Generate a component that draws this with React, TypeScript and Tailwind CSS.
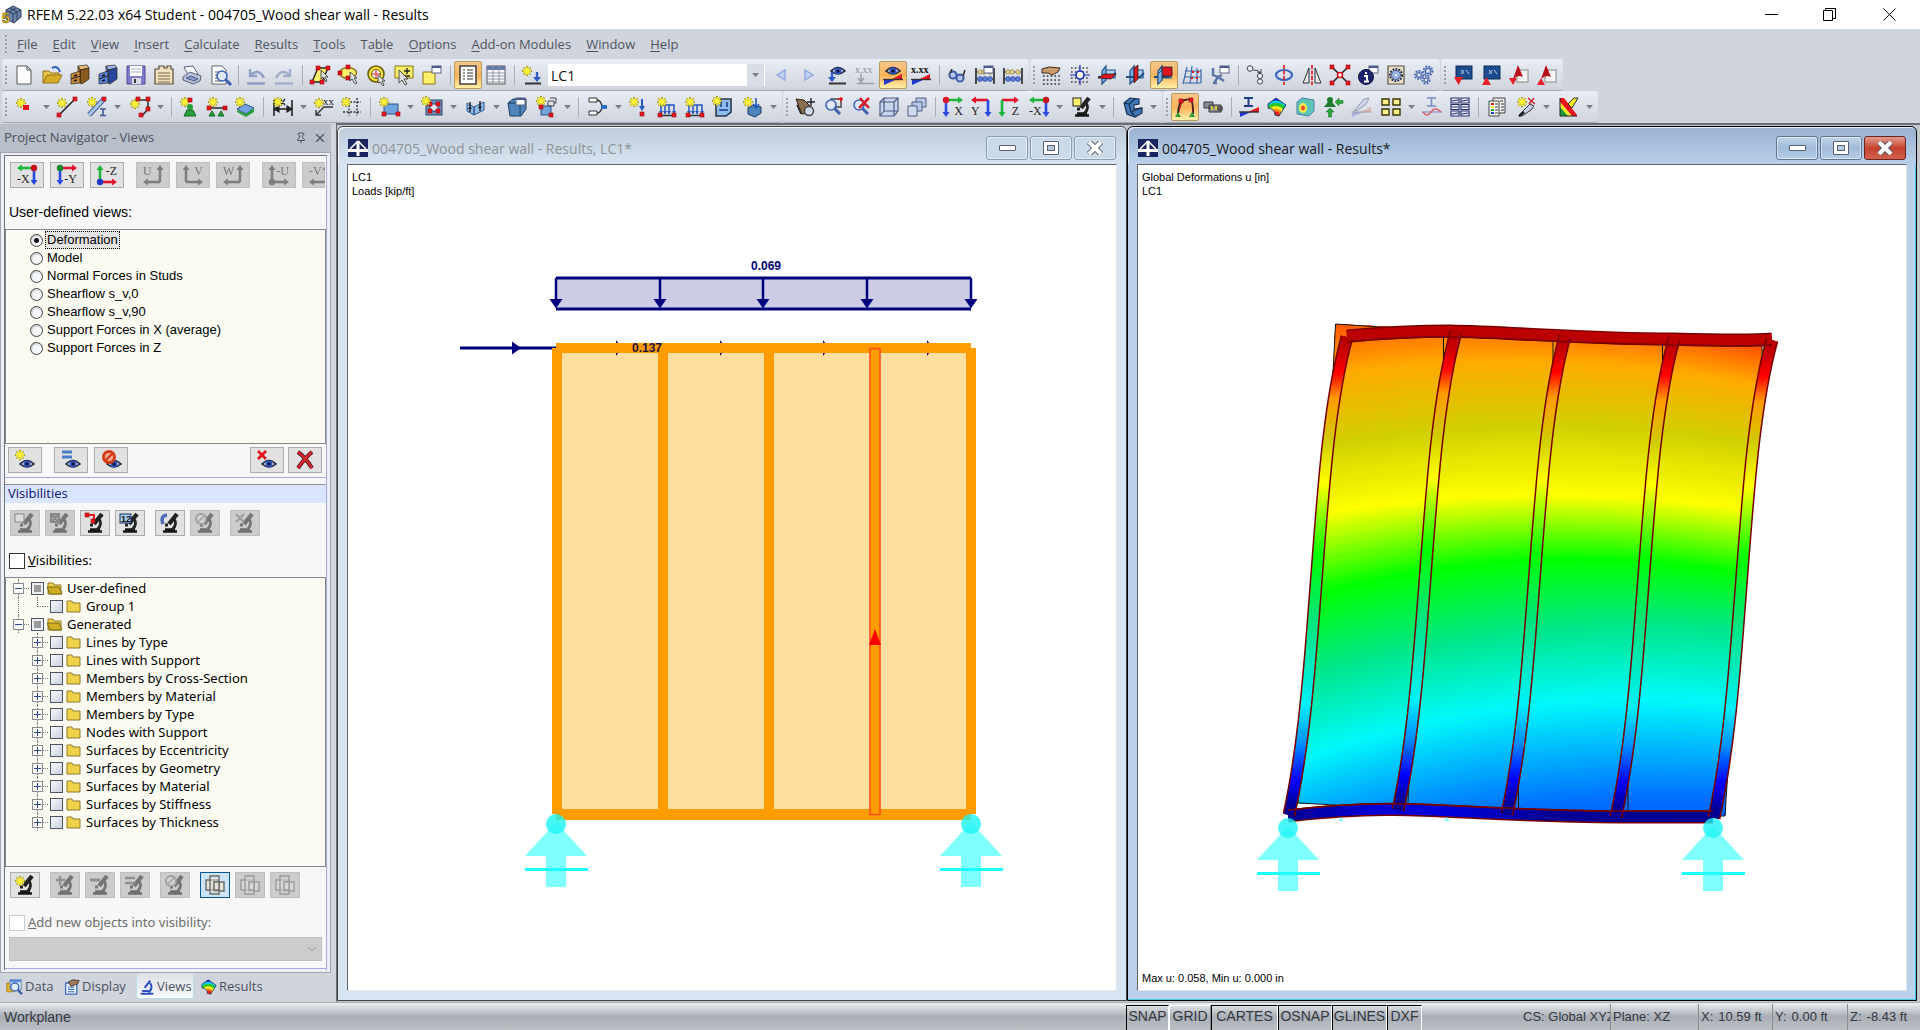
import type { ReactNode } from 'react';
import { Pin, X } from 'lucide-react';

const menus = [
  ['', 'F', 'ile'],
  ['', 'E', 'dit'],
  ['', 'V', 'iew'],
  ['', 'I', 'nsert'],
  ['', 'C', 'alculate'],
  ['', 'R', 'esults'],
  ['', 'T', 'ools'],
  ['Ta', 'b', 'le'],
  ['', 'O', 'ptions'],
  ['', 'A', 'dd-on Modules'],
  ['', 'W', 'indow'],
  ['', 'H', 'elp'],
];

/* ---------- icon building blocks, all on a 20x20 grid ---------- */

const star = (x: number, y: number) => (
  <g transform={`translate(${x} ${y})`}>
    <path d="M0-5V5M-5 0H5M-3.5-3.5l7 7M3.5-3.5l-7 7" stroke="#a39c1c" strokeWidth="2" />
    <path d="M0-4V4M-4 0H4M-3-3l6 6M3-3l-6 6" stroke="#fff23a" strokeWidth="1.4" />
  </g>
);

const node = (x: number, y: number) => <rect x={x - 2} y={y - 2} width="4" height="4" fill="#e8131c" stroke="#9c0a10" strokeWidth=".6" />;

const eye = (x: number, y: number) => (
  <g transform={`translate(${x} ${y})`}>
    <path d="M-7 0Q0-7 7 0Q0 6-7 0Z" fill="#b9c4e4" stroke="#1d2440" strokeWidth="1.6" />
    <circle r="3.4" fill="#2f55b8" />
    <circle r="1.5" fill="#0a0f28" />
  </g>
);

const lens = (x: number, y: number) => (
  <g transform={`translate(${x} ${y})`}>
    <path d="M3 3l6 6" stroke="#3d5fae" strokeWidth="3" />
    <circle r="5" fill="#dfe9fa" stroke="#3c64b4" strokeWidth="1.6" />
  </g>
);

const scope = (
  <g>
    <path d="M3 18.500h14M5 16.500h10" stroke="#161616" strokeWidth="2.400" />
    <path d="M17 1l-8 10" stroke="#222" strokeWidth="4.400" />
    <path d="M8 12l-3 0M14 6q4 5-2 11" stroke="#222" strokeWidth="2.800" fill="none" />
  </g>
);

// fan of rainbow bands, blue at the rim and red at the tip
const palette = (
  <g>
    <clipPath id="fan">
      <path d="M1 7L9 1l10 7-7 11-4-1q0-6-7-7z" />
    </clipPath>
    <g clipPath="url(#fan)">
      <path d="M0 0h20v20H0z" fill="#1424d8" />
      <circle cx="9" cy="19" r="15.500" fill="#12c8e8" />
      <circle cx="9" cy="19" r="13" fill="#27c72a" />
      <circle cx="9" cy="19" r="10" fill="#f4e81c" />
      <circle cx="9" cy="19" r="7" fill="#f48a1c" />
      <circle cx="9" cy="19" r="4.500" fill="#e8201a" />
    </g>
    <path d="M1 7L9 1l10 7-7 11-4-1q0-6-7-7z" stroke="#1c2c5c" strokeWidth=".8" />
  </g>
);

const win = (x: number, y: number) => (
  <g>
    <rect x={x} y={y} width="9" height="7" fill="#fff" stroke="#5c6484" />
    <rect x={x} y={y} width="9" height="2" fill="#4a5890" />
  </g>
);

const planeCross = (
  <g strokeWidth="1.200">
    <path d="M6 5h11v8H6z" fill="#b4d0ee" stroke="#1d4f86" />
    <path d="M8 1v14l-4 4V6z" fill="#7fb0e0" stroke="#1d4f86" />
    <path d="M0 12h14l4-4" fill="none" stroke="#1d4f86" strokeWidth="2" />
  </g>
);

const abacus = (
  <g>
    <path d="M1 3v16M19 3v16" stroke="#222" strokeWidth="1.600" />
    <path d="M1 7h18M1 14h18" stroke="#444" />
    {[5, 9, 15].map((x) => <circle key={x} cx={x} cy="7" r="2.200" fill="#e6d68c" stroke="#7c6f35" strokeWidth=".6" />)}
    {[5, 10, 15].map((x) => <circle key={x} cx={x} cy="14" r="2.500" fill="#5a7fd8" stroke="#233c86" strokeWidth=".6" />)}
  </g>
);

const dots = (
  <path d="M1 11h18M1 15h18M1 19h18" stroke="#333" strokeWidth="1.600" strokeDasharray="1.6 2.200" />
);

const gear = (x: number, y: number, r: number, fill = '#4a6cb8') => (
  <g transform={`translate(${x} ${y})`}>
    <circle r={r} fill="none" stroke={fill} strokeWidth="2" strokeDasharray="1.800 1.200" />
    <circle r={r - 1.5} fill="#9db4e4" stroke="#2c4684" strokeWidth=".8" />
    <circle r="1" fill="#fff" />
  </g>
);

const loads = (
  <g>
    <path d="M4 8h13v9M4 8v9M8 8v9M12 8v9" stroke="#2558c0" strokeWidth="1.500" fill="none" />
    <path d="M2 14l2 3 2-3zM6 14l2 3 2-3zM10 14l2 3 2-3zM15 14l2 3 2-3z" fill="#2558c0" />
    <path d="M2 18.500h16" stroke="#333" strokeWidth="1.500" />
    {node(3, 18)}
    {node(17, 18)}
  </g>
);

// small filing cabinet: lit top, two drawers in front
const cabinet = (light: string, front: string, side: string) => (
  <g stroke="#2a2418" strokeWidth=".7">
    <path d="M8 1l9-1 2 3-9 2z" fill={light} />
    <path d="M10 5l9-2v11l-7 5-2-1z" fill={side} />
    <path d="M8 1l2 4v6H8z" fill={front} />
    <path d="M1 9l9-3v5l-9 3zM1 14l9-3v7l-9 1z" fill={front} />
    <path d="M4 11l3-1M4 16l3-1" stroke="#111" strokeWidth="1.600" />
  </g>
);

type AxesProps = { label: string; corner: 'tl' | 'tr' | 'bl' | 'br'; h: string; v: string; dot?: string };

const Axes = ({ label, corner, h, v, dot }: AxesProps) => {
  const top = corner[0] === 't';
  const left = corner[1] === 'l';
  const cx = left ? 3 : 17;
  const cy = top ? 3 : 17;
  const ex = left ? 20 : 0;
  const ey = top ? 20 : 0;
  const sx = left ? -5 : 5;
  const sy = top ? -5 : 5;
  return (
    <g>
      <path d={`M${cx} ${cy}H${ex + sx / 2}`} stroke={h} strokeWidth="2.600" />
      <path d={`M${ex} ${cy}l${sx}-3.500v7z`} fill={h} />
      <path d={`M${cx} ${cy}V${ey + sy / 2}`} stroke={v} strokeWidth="2.600" />
      <path d={`M${cx} ${ey}l-3.500 ${sy}h7z`} fill={v} />
      {dot && <circle cx={cx} cy={cy} r="3.200" fill={dot} />}
      <text
        x={left ? 20 : 0}
        y={top ? 18 : 10}
        textAnchor={left ? 'end' : 'start'}
        fontSize="12"
        fontFamily="Liberation Serif, serif"
        fill="#222"
      >
        {label}
      </text>
    </g>
  );
};

const R = '#e0142c';
const G = '#1fb43c';
const B = '#2848e0';

const icons: Record<string, ReactNode> = {
  new: <path d="M3 1h10l4 4v14H3zM13 1v4h4" fill="#fff" stroke="#555" />,
  open: (
    <g stroke="#8a6b12" strokeWidth=".9">
      <path d="M1 18V6h6l2 2h8v3" fill="#e8c64a" />
      <path d="M1 18l4-8h15l-4 8z" fill="#d9ac28" />
      <path d="M10 3q6-3 8 4" stroke="#2e60b8" strokeWidth="2" fill="none" />
    </g>
  ),
  cabinet: cabinet('#e8bc78', '#c8893c', '#8a5a1c'),
  cabinetBlue: cabinet('#9cb8f0', '#5a84dc', '#28479c'),
  save: (
    <g>
      <path d="M1 1h18v18H1z" fill="#7d7cc8" stroke="#4c4a94" />
      <path d="M4 1h12v10H4z" fill="#fff" />
      <path d="M5 4h10M5 7h10" stroke="#a7a7cc" />
      <path d="M6 13h9v6H6z" fill="#d9dbe6" />
      <path d="M8 14h2v4H8z" fill="#333" />
    </g>
  ),
  protocol: (
    <g>
      <path d="M1 4h4V1h5v2h3V1h4v3h2v15H1z" fill="#f0dfc0" stroke="#5c4c34" strokeWidth="1.200" />
      <path d="M4 8h12M4 11h12M4 14h12M4 17h12" stroke="#7c6a4a" />
    </g>
  ),
  print: (
    <g stroke="#4a4f6c" strokeWidth=".9">
      <path d="M2 2l9-1 5 8-9 3z" fill="#fff" />
      <path d="M1 12l7-5 11 4-1 5-7 3-10-4z" fill="#bcc6e0" />
      <path d="M4 13l8 3 4-2-7-3z" fill="#8a9ad4" />
    </g>
  ),
  preview: (
    <g>
      <path d="M2 1h10l4 4v14H2z" fill="#fff" stroke="#666" />
      <path d="M5 7h7M5 10h4M5 13h4M5 16h7" stroke="#555" />
      {lens(12, 11)}
    </g>
  ),
  undo: <path d="M1 18.500h18M4 4v7h7M4 11q8-9 14 2" stroke="#8f9fc4" strokeWidth="2.400" fill="none" />,
  redo: <path d="M1 18.500h18M16 4v7H9M16 11q-8-9-14 2" stroke="#a2aecb" strokeWidth="2.400" fill="none" />,
  plane: (
    <g>
      <path d="M2 17L8 3h10l-6 14z" fill="#fdf06a" stroke="#222" strokeWidth="1.400" />
      {node(8, 3)}
      {node(18, 3)}
      {node(2, 17)}
      {node(12, 17)}
      <path d="M11 5v9l2-2 3 5 1-1-2-4h3z" fill="#ddd" stroke="#333" strokeWidth=".8" />
    </g>
  ),
  lasso: (
    <g>
      <ellipse cx="10" cy="8" rx="8.500" ry="5.500" fill="#fdf06a" stroke="#8a7414" strokeWidth="1.400" />
      {node(10, 2)}
      {node(2, 8)}
      {node(10, 13)}
      <path d="M12 7v9l2-2 3 5 2-1-3-5h3z" fill="#ddd" stroke="#333" strokeWidth=".8" />
    </g>
  ),
  circleSel: (
    <g>
      <circle cx="10" cy="9" r="8" fill="#f7e33a" stroke="#6d5c08" strokeWidth="1.600" />
      <circle cx="10" cy="9" r="4.500" fill="#fff" stroke="#6d5c08" />
      <path d="M10 5v8M6 9h8" stroke="#e8131c" />
      <path d="M12 10v8l2-1 3 4 1-1-2-4h3z" fill="#ddd" stroke="#333" strokeWidth=".8" />
    </g>
  ),
  plusMinus: (
    <g>
      <path d="M1 1h18v12H1z" fill="#fdf06a" stroke="#8a7414" />
      <path d="M13 3v6M10 6h6M10 11h6" stroke="#222" strokeWidth="1.400" />
      <path d="M5 5v13l3-3 3 5 2-1-3-5h4z" fill="#ddd" stroke="#333" strokeWidth=".8" />
    </g>
  ),
  yellowWin: (
    <g>
      <path d="M1 7h12v12H1z" fill="#fdf06a" stroke="#8a7414" />
      {win(10, 1)}
    </g>
  ),
  listPanel: (
    <g>
      <path d="M2 1h16v18H2z" fill="#fff" stroke="#444" strokeWidth="1.600" />
      <path d="M5 5h2M5 8h2M5 11h2M5 14h2M9 5h6M9 8h6M9 11h6M9 14h6" stroke="#333" />
    </g>
  ),
  table: (
    <g>
      <path d="M1 1h18v18H1z" fill="#fff" stroke="#555" />
      <path d="M1 1h18v4H1z" fill="#6478a8" />
      <path d="M1 8h18M1 11h18M1 14h18M1 17h18M7 1v18M13 1v18" stroke="#8a8f9c" />
    </g>
  ),
  newLoad: (
    <g>
      {star(5, 6)}
      <path d="M3 18.500h16" stroke="#333" strokeWidth="2" />
      <path d="M15 7v8" stroke="#2f5cc4" strokeWidth="2.400" />
      <path d="M11 12l4 5 4-5z" fill="#2f5cc4" />
    </g>
  ),
  prev: <path d="M14 5v10L6 10z" fill="#c3d2f2" stroke="#8fa8e0" strokeWidth="1.400" />,
  next: <path d="M6 5v10l8-5z" fill="#c3d2f2" stroke="#8fa8e0" strokeWidth="1.400" />,
  eyeLoad: (
    <g>
      {eye(11, 6)}
      <path d="M2 18.500h17" stroke="#333" strokeWidth="2" />
      <path d="M5 7v7" stroke="#2f5cc4" strokeWidth="2.400" />
      <path d="M1 12l4 5 4-5z" fill="#2f5cc4" />
    </g>
  ),
  xxxGray: (
    <g opacity=".5">
      <text x="0" y="8" fontSize="10" fontFamily="Liberation Serif, serif" fill="#333">x.xx</text>
      <path d="M2 18.500h17M6 9v7M3 13l3 4 3-4" stroke="#666" strokeWidth="1.600" fill="none" />
    </g>
  ),
  eyeResults: (
    <g>
      {eye(10, 6)}
      <path d="M19 9v5H9z" fill="#e8141c" />
      <path d="M1 20v-5h11z" fill="#2038d0" />
      <path d="M0 14.500h20" stroke="#333" strokeWidth="1.400" />
    </g>
  ),
  xxx: (
    <g>
      <text x="0" y="8" fontSize="10" fontWeight="bold" fontFamily="Liberation Serif, serif" fill="#111">x.xx</text>
      <path d="M19 9v5H9z" fill="#e8141c" />
      <path d="M1 20v-5h11z" fill="#2038d0" />
      <path d="M0 14.500h20" stroke="#333" strokeWidth="1.400" />
    </g>
  ),
  glasses: (
    <g fill="none" stroke="#3e5aa4" strokeWidth="2">
      <circle cx="6" cy="10" r="3.600" fill="#b5c6ee" />
      <circle cx="13" cy="13" r="3.600" fill="#b5c6ee" />
      <path d="M3 8L5 4M16 11l2-6" stroke="#333" strokeWidth="1.600" />
    </g>
  ),
  abacusWin: (
    <g>
      {abacus}
      {win(9, 1)}
    </g>
  ),
  abacus,
  handGrid: (
    <g>
      {dots}
      <path d="M0 4l7-2 11 1-2 4-6 3-4-2-6 0z" fill="#c99a6c" stroke="#3f2a18" />
    </g>
  ),
  snapGrid: (
    <g>
      <path d="M1 3h18M1 7h18M1 13h18M1 17h18" stroke="#444" strokeWidth="1.600" strokeDasharray="1.6 2.200" />
      <path d="M10 0v20M0 10h20" stroke="#1c2cb0" strokeWidth="1.200" />
      <circle cx="10" cy="10" r="4" fill="#fff" stroke="#1c2cb0" strokeWidth="1.600" />
    </g>
  ),
  planeXY: (
    <g>
      {planeCross}
      <path d="M0 13l6-4h12l-5 5z" fill="#e0141c" stroke="#222" strokeWidth=".8" />
    </g>
  ),
  planeYZ: (
    <g>
      {planeCross}
      <path d="M8 3l4-3v14l-4 4z" fill="#e0141c" stroke="#222" strokeWidth=".8" />
    </g>
  ),
  planeXZ: (
    <g>
      {planeCross}
      <path d="M8 2h10v9H8z" fill="#e0141c" stroke="#222" strokeWidth=".8" />
      <path d="M8 5v10l-4 4V9z" fill="#7fb0e0" stroke="#1d4f86" />
    </g>
  ),
  gridTilt: (
    <g stroke="#3b6ca8" strokeWidth="1.200" fill="none">
      <path d="M5 2L1 19M10 1L8 19M15 3l0 16M19 4v14M3 6h16M2 12h17M1 18h18" />
      <path d="M10 7h8M9 13h9" stroke="#e0141c" strokeDasharray="2 3" strokeWidth="2" />
    </g>
  ),
  cogWin: (
    <g>
      <path d="M3 3v7l5 2 4-2M4 18l4-6 6 4M3 18h4" stroke="#5a74a8" strokeWidth="2.400" fill="none" />
      {win(10, 1)}
    </g>
  ),
  copy: (
    <g fill="#eef" stroke="#444">
      <circle cx="4" cy="3.500" r="2.800" />
      <circle cx="14" cy="11" r="2.600" />
      <circle cx="14" cy="16.500" r="2.600" />
      <path d="M7 5q6 0 8 3M15 8l-4-1M15 8V4" fill="none" />
    </g>
  ),
  rotate: (
    <g fill="none">
      <ellipse cx="10" cy="10" rx="8" ry="5" stroke="#3b6cc0" strokeWidth="2.200" />
      <path d="M10 0v20" stroke="#e0141c" strokeWidth="1.600" strokeDasharray="4 1.500" />
    </g>
  ),
  mirror: (
    <g>
      <path d="M7 3v15H1zM13 3v15h6z" fill="#e4e6ea" stroke="#333" />
      <path d="M10 0v20" stroke="#e0141c" strokeWidth="1.600" strokeDasharray="4 1.500" />
    </g>
  ),
  cross: (
    <g>
      <path d="M2 2l16 16M18 2L2 18" stroke="#222" strokeWidth="1.600" />
      {node(2, 2)}
      {node(18, 2)}
      {node(2, 18)}
      {node(18, 18)}
      <circle cx="10" cy="10" r="2.500" fill="#fff" stroke="#e0141c" strokeWidth="1.600" />
    </g>
  ),
  info: (
    <g>
      {win(11, 1)}
      <circle cx="8" cy="12" r="7.500" fill="#1c2470" stroke="#0c1040" />
      <path d="M8 7v2M6 11h3v5M6 16.500h5" stroke="#fff" strokeWidth="2" fill="none" />
    </g>
  ),
  gearPage: (
    <g>
      <path d="M2 1h16v18H2z" fill="#ecdfc8" stroke="#5c5546" strokeWidth="1.200" />
      {gear(10, 10, 6, '#1c2c54')}
    </g>
  ),
  gears: (
    <g>
      {gear(5, 10, 4)}
      {gear(14, 6, 4.5)}
      {gear(12, 15, 3.5)}
    </g>
  ),
  xyzDown: (
    <g>
      <rect x="3" y="1" width="16" height="13" fill="#1c4c8c" stroke="#0e2c58" />
      <path d="M8 5l3 4M11 5l-3 4M13 5l3 4" stroke="#bcd4f4" />
      <path d="M1 12h9l-4.500 8z" fill="#e8202a" />
    </g>
  ),
  xyzUp: (
    <g>
      <rect x="3" y="1" width="16" height="13" fill="#1c4c8c" stroke="#0e2c58" />
      <path d="M8 5l3 4M11 5l-3 4M13 5l3 4" stroke="#bcd4f4" />
      <path d="M1 20h9l-4.500-8z" fill="#e8202a" />
    </g>
  ),
  pdfDown: (
    <g>
      <rect x="8" y="5" width="11" height="12" fill="#f4f4f4" stroke="#888" />
      <path d="M4 14L9 0l5 12q-5-3-10 2z" fill="#b80c18" />
      <path d="M0 13h8l-4 7z" fill="#e8202a" />
    </g>
  ),
  pdfUp: (
    <g>
      <rect x="8" y="5" width="11" height="12" fill="#f4f4f4" stroke="#888" />
      <path d="M4 14L9 0l5 12q-5-3-10 2z" fill="#b80c18" />
      <path d="M0 20h8l-4-7z" fill="#e8202a" />
    </g>
  ),
  newNode: (
    <g>
      {star(5, 6)}
      <rect x="7" y="8" width="6" height="5" fill="#e8131c" />
    </g>
  ),
  newLine: (
    <g>
      <path d="M2 18L18 2" stroke="#222" strokeWidth="1.600" />
      {star(5, 6)}
      {node(2, 18)}
      {node(18, 2)}
    </g>
  ),
  newMember: (
    <g>
      <path d="M2 18L17 2" stroke="#3c5c9c" strokeWidth="5" />
      <path d="M2 18L17 2" stroke="#a9c4ec" strokeWidth="3" />
      {star(5, 5)}
      {node(17, 2)}
      <path d="M13 12h6M13 18.500h6M16 12v6" stroke="#3c5c9c" strokeWidth="1.600" />
    </g>
  ),
  newPoly: (
    <g>
      <path d="M8 3h10v9l-6 7" fill="none" stroke="#333" strokeWidth="1.600" />
      {star(5, 7)}
      {node(8, 2)}
      {node(18, 2)}
      {node(18, 12)}
      {node(11, 18)}
    </g>
  ),
  nodeSupport: (
    <g>
      {star(6, 5)}
      {node(11, 3)}
      <circle cx="11" cy="10" r="3" fill="#2aa03a" />
      <path d="M5 19l3-6h6l3 6z" fill="#2aa03a" stroke="#126820" />
    </g>
  ),
  lineSupport: (
    <g>
      <path d="M2 11h16" stroke="#333" strokeWidth="1.600" />
      {star(6, 5)}
      {node(2, 11)}
      {node(18, 11)}
      <path d="M2 19l3-5 3 5zM11 19l3-5 3 5z" fill="#2aa03a" stroke="#126820" />
    </g>
  ),
  surfSupport: (
    <g>
      <path d="M2 12l8-5 9 4-8 6z" fill="#74a4e0" stroke="#2c548c" />
      <path d="M2 13l9 4 8-6v4l-8 5-9-5z" fill="#2aa03a" />
      {star(5, 5)}
    </g>
  ),
  dim: (
    <g>
      <path d="M1 3v16M19 3v16M1 12h18" stroke="#222" strokeWidth="1.600" />
      <path d="M1 12l5-3v6zM19 12l-5-3v6zM7 2l5 6M12 2L7 8" fill="#222" stroke="#222" strokeWidth="1.200" />
      {star(5, 5)}
    </g>
  ),
  comment: (
    <g>
      {star(5, 6)}
      <text x="9" y="8" fontSize="11" fontFamily="Liberation Serif, serif" fill="#222">xx</text>
      <path d="M19 10H10L2 18M2 13v5h5" stroke="#333" strokeWidth="1.400" fill="none" />
    </g>
  ),
  guide: (
    <g>
      <path d="M7 1v18M15 1v18M1 5h18M1 15h18" stroke="#333" strokeWidth="1.400" strokeDasharray="2 1.500" />
      {star(4, 5)}
    </g>
  ),
  surface: (
    <g>
      <rect x="4" y="7" width="14" height="10" fill="#6fa4dc" stroke="#2c548c" />
      {star(4, 5)}
      {node(4, 17)}
      {node(18, 17)}
    </g>
  ),
  opening: (
    <g>
      <rect x="3" y="3" width="16" height="15" fill="#6c94c4" stroke="#2c4468" />
      <rect x="7" y="7" width="8" height="7" fill="#dfeaf8" stroke="#2c4468" />
      {node(7, 7)}
      {node(15, 7)}
      {node(7, 14)}
      {node(15, 14)}
      {star(3, 4)}
    </g>
  ),
  fold: (
    <g>
      <path d="M1 6l7 4v8l-7-4zM8 10l10-5v8L8 18z" fill="#8ebce8" stroke="#2c548c" />
      <path d="M4 5v10M14 4v10" stroke="#222" strokeWidth="1.400" />
      <path d="M2 12l2-3 2 3zM12 11l2-3 2 3z" fill="#222" />
    </g>
  ),
  solidWin: (
    <g>
      <path d="M1 6l5-4h13v10l-5 7H3z" fill="#4c84bc" stroke="#1c3c64" />
      <path d="M1 6h12v12" stroke="#1c3c64" />
      {win(9, 1)}
    </g>
  ),
  solid: (
    <g>
      <rect x="4" y="9" width="10" height="9" fill="#6fa4dc" stroke="#2c548c" />
      <path d="M11 4h6v5h-6zM13 1h6v5h-2" fill="none" stroke="#444" />
      {star(4, 4)}
      {node(4, 10)}
      {node(14, 18)}
    </g>
  ),
  combine: (
    <g>
      <path d="M1 1h8v4H1zM1 14h8v4H1z" fill="#fff" stroke="#333" />
      <path d="M9 3q4 0 5 7M9 16q4 0 5-6" stroke="#333" fill="none" strokeWidth="1.400" />
      <rect x="13" y="8" width="6" height="4" fill="#2f6cc4" />
    </g>
  ),
  nodeLoad: (
    <g>
      {star(5, 5)}
      <path d="M13 2v9" stroke="#2558c0" strokeWidth="2" />
      <path d="M10 9l3 5 3-5z" fill="#2558c0" />
      {node(13, 17)}
    </g>
  ),
  loadLine: (
    <g>
      {loads}
      {star(5, 5)}
    </g>
  ),
  loadSurf: (
    <g>
      <path d="M3 2h15v13l-5 4H3z" fill="#8ebce8" stroke="#28384c" strokeWidth="1.600" />
      <path d="M8 5v5M14 5v5M6 13h9" stroke="#1c3c8c" strokeWidth="1.600" />
      {star(4, 4)}
    </g>
  ),
  loadSolid: (
    <g>
      <path d="M5 11l6-3 7 2v6l-6 4-7-3z" fill="#4c84bc" stroke="#1c3c64" />
      <path d="M13 1v8M10 7l3 4 3-4" stroke="#2558c0" strokeWidth="1.600" fill="none" />
      {star(5, 5)}
    </g>
  ),
  pan: (
    <g>
      <path d="M1 2l8 1 6 6-2 7-6 1-3-7z" fill="#8a6c50" stroke="#32241a" />
      <circle cx="14" cy="14" r="4.500" fill="#cbd8e8" stroke="#444" strokeWidth="1.400" />
      <path d="M16 1v8M12 5h8M2 8l4 9" stroke="#222" strokeWidth="1.400" />
    </g>
  ),
  zoomWin: (
    <g>
      <path d="M8 2h10v8H8z" fill="none" stroke="#444" strokeWidth="1.400" />
      {lens(8, 8)}
      <path d="M18 0v5M15 2h5" stroke="#e0141c" strokeWidth="1.400" />
    </g>
  ),
  zoomAll: (
    <g>
      {lens(8, 8)}
      <path d="M9 1l9 10M18 1L8 11" stroke="#d4202a" strokeWidth="2.600" />
    </g>
  ),
  cube: (
    <g fill="#c8d4ea" stroke="#4c5c84" strokeWidth="1.200">
      <path d="M1 5l4-4h14v13l-4 5H1z" />
      <path d="M1 5h14v14M15 5l4-4M5 1v13h14M5 14l-4 5" fill="none" />
    </g>
  ),
  cubes: (
    <g fill="#b9c8e4" stroke="#4c5c84">
      <path d="M9 1h10v9H9z" />
      <path d="M5 5h10v9H5z" />
      <path d="M1 9h9v10H1z" fill="#cfdaee" />
    </g>
  ),
  axX: <Axes label="X" corner="tl" h={G} v={B} dot="#e0142c" />,
  axY: <Axes label="Y" corner="tr" h={R} v={B} />,
  axZ: <Axes label="Z" corner="tl" h={R} v={G} />,
  axNX: <Axes label="-X" corner="tr" h={G} v={B} dot="#c8101c" />,
  axNY: <Axes label="-Y" corner="tl" h={R} v={B} dot="#128a2c" />,
  axNZ: <Axes label="-Z" corner="bl" h={R} v={G} dot="#2038c0" />,
  axU: <Axes label="U" corner="br" h="#333" v="#333" />,
  axV: <Axes label="V" corner="bl" h="#333" v="#333" />,
  axW: <Axes label="W" corner="br" h="#333" v="#333" />,
  axNU: <Axes label="-U" corner="bl" h="#333" v="#333" dot="#333" />,
  axNV: <Axes label="-V" corner="br" h="#333" v="#333" />,
  scopeBox: (
    <g>
      {scope}
      <rect x="1" y="1" width="8" height="8" fill="#fdf06a" stroke="#222" />
    </g>
  ),
  visBlock: (
    <g stroke="#16304e" strokeWidth="1.200">
      <path d="M1 6l6-5 9 1v5l-5 1v4l8-1v5l-7 4-8-3z" fill="#3f78b4" />
      <path d="M1 6l5 1 6-5M6 7l2 8 4 4M8 15l10-4" fill="none" />
    </g>
  ),
  frame: (
    <g>
      <path d="M3 17L7 3l10-1 1 15" fill="none" stroke="#c01818" strokeWidth="1.400" />
      <path d="M3 17Q3 8 6 5q7-4 10-2 3 6 2 14" fill="none" stroke="#222" strokeWidth="1.400" />
      {node(6, 4)}
      {node(16, 3)}
      <path d="M0 20l3-5 3 5zM14 20l3-5 3 5z" fill="#2aa03a" />
    </g>
  ),
  roller: (
    <g>
      <path d="M1 5h9v6H1zM6 8h12v7H6z" fill="#8a8f98" stroke="#333" />
      <circle cx="17" cy="11.500" r="3" fill="#555" />
      <path d="M8 11h2M12 11h2" stroke="#e8d414" strokeWidth="3" />
    </g>
  ),
  ibeam: (
    <g>
      <path d="M5 1h9M5 9h9M9.500 1v8" stroke="#1c3c8c" strokeWidth="2" />
      <path d="M20 10v5H9z" fill="#e8141c" />
      <path d="M1 20v-5h11z" fill="#2038d0" />
      <path d="M0 15h20" stroke="#333" strokeWidth="1.400" />
    </g>
  ),
  palette,
  cubeStress: (
    <g>
      <path d="M2 5l5-4 12 2v11l-5 5-12-2z" fill="#5cc8b4" stroke="#4c7ca8" />
      <ellipse cx="8" cy="11" rx="4" ry="5" fill="#f4ec4c" />
      <ellipse cx="8" cy="11" rx="2" ry="2.500" fill="#e8482a" />
      <path d="M14 7v12" stroke="#6cb4d8" />
    </g>
  ),
  supports: (
    <g>
      <circle cx="7" cy="3" r="3" fill="#1c7c2c" />
      <path d="M1 10l4-5h4l4 5z" fill="#1c7c2c" />
      <path d="M12 5l4-4v2.500h4v3h-4V9zM7 11l4 4H8.500v5h-3v-5H3z" fill="#28a83a" stroke="#126820" strokeWidth=".5" />
    </g>
  ),
  section: (
    <g opacity=".6">
      <path d="M3 14L13 2l5-1-3 6-8 6z" fill="#c3d0e8" stroke="#5c7098" />
      <path d="M20 10v5H9z" fill="#e89a9c" />
      <path d="M1 20v-5h11z" fill="#8a94d8" />
      <path d="M0 15h20" stroke="#777" />
    </g>
  ),
  four: (
    <g fill="#fdf08a" stroke="#3a3408" strokeWidth="1.400">
      <path d="M1 2h7v6H1zM12 2h7v6h-7zM1 12h7v6H1zM12 12h7v6h-7z" />
    </g>
  ),
  ibeamWave: (
    <g opacity=".65">
      <path d="M5 1h9M5 9h9M9.500 1v8" stroke="#3c5cac" strokeWidth="1.600" />
      <path d="M0 15h20" stroke="#4c5cb0" />
      <path d="M1 15q4 6 8 0t10 0" fill="none" stroke="#d4202a" strokeWidth="1.400" />
    </g>
  ),
  panels: (
    <g fill="#e8ecf8" stroke="#27316c" strokeWidth="1.200">
      <path d="M1 1h8v5H1zM11 1h8v5h-8zM1 7.500h8v5H1zM11 7.500h8v5h-8zM1 14h8v5H1zM11 14h8v5h-8z" />
      <path d="M2 4l6-1M12 4l6-1M2 10h6M12 10h6M2 17l6-1M12 17l6-1" />
    </g>
  ),
  legend: (
    <g>
      <path d="M7 1h12v15H7z" fill="#eee" stroke="#444" />
      <path d="M3 4h10v15H3z" fill="#fff" stroke="#444" />
      <path d="M5 7h3" stroke="#e8141c" strokeWidth="2" />
      <path d="M5 10h3" stroke="#f4e81c" strokeWidth="2" />
      <path d="M5 13h3" stroke="#2aa03a" strokeWidth="2" />
      <path d="M5 16h3" stroke="#2038d0" strokeWidth="2" />
      <path d="M9 7h3M9 10h3M9 13h3M9 16h3M14 4h3M15 7h3M15 10h3M15 13h3" stroke="#333" />
    </g>
  ),
  flash: (
    <g>
      <path d="M3 18L14 7l4 2-3 4-9 6z" fill="#c3d0e8" stroke="#333" />
      <path d="M2 19l5-5 2 2-5 4z" fill="#222" />
      {star(6, 5)}
      <path d="M12 1l7 6M18 1l-5 6" stroke="#d4202a" strokeWidth="1.400" />
    </g>
  ),
  stripes: (
    <g>
      <path d="M1 1h4l13 17v1h-5L1 5z" fill="#e8141c" />
      <path d="M1 5l12 14H9L1 10z" fill="#f4e81c" />
      <path d="M1 10l8 9H1z" fill="#1c9c34" />
      <path d="M9 7l6-6h4l-6 10z" fill="#f4e81c" stroke="#333" />
      <path d="M1 1v18h17" stroke="#222" fill="none" />
    </g>
  ),
  viewNew: (
    <g>
      {star(5, 5)}
      {eye(12, 14)}
    </g>
  ),
  viewSet: (
    <g>
      <path d="M1 2h10M1 7h10" stroke="#4c7cc8" strokeWidth="3" />
      {eye(12, 14)}
    </g>
  ),
  viewOff: (
    <g>
      {eye(13, 14)}
      <circle cx="8" cy="7" r="5.500" fill="#f2b09a" stroke="#d43a14" strokeWidth="3" />
      <path d="M4 11l8-8" stroke="#d43a14" strokeWidth="2.400" />
    </g>
  ),
  viewDel: (
    <g>
      <path d="M1 1l8 8M9 1L1 9" stroke="#e0141c" strokeWidth="2.600" />
      {eye(12, 14)}
    </g>
  ),
  del: (
    <g fill="none">
      <path d="M3 2q7 5 14 16M17 2Q10 8 3 18" stroke="#4c1418" strokeWidth="4" />
      <path d="M3 2q7 5 14 16M17 2Q10 8 3 18" stroke="#d4242e" strokeWidth="2.600" />
    </g>
  ),
  visBox: (
    <g>
      {scope}
      <rect x="0" y="1" width="9" height="8" fill="#eee" stroke="#444" />
    </g>
  ),
  visX: (
    <g>
      {scope}
      <path d="M1 1h8v8H1zM1 1l8 8M9 1L1 9" stroke="#444" fill="#999" strokeWidth="2" />
    </g>
  ),
  visRed: (
    <g>
      {scope}
      <path d="M1 2h8v6" stroke="#e0141c" strokeWidth="2" fill="none" />
      {node(2, 2)}
      {node(8, 8)}
    </g>
  ),
  visNum: (
    <g>
      {scope}
      <rect x="0" y="1" width="11" height="9" fill="#a8d0f4" stroke="#12305c" />
      <text x="1" y="9" fontSize="9" fontWeight="bold" fontFamily="Liberation Sans, sans-serif" fill="#111">12</text>
    </g>
  ),
  visTurn: (
    <g>
      {scope}
      <path d="M3 11Q0 3 7 2" stroke="#4c6cb8" strokeWidth="3.500" fill="none" />
    </g>
  ),
  visNo: (
    <g>
      {scope}
      <circle cx="6" cy="6" r="5" fill="#ddd" stroke="#777" strokeWidth="2" />
      <path d="M2 10l8-8" stroke="#777" strokeWidth="1.600" />
    </g>
  ),
  visDel: (
    <g>
      {scope}
      <path d="M1 1l8 8M9 1L1 9" stroke="#777" strokeWidth="2.400" />
    </g>
  ),
  visNew: (
    <g>
      {scope}
      {star(5, 6)}
    </g>
  ),
  visPlus: (
    <g>
      {scope}
      <path d="M5 1v9M1 5h9" stroke="#555" strokeWidth="2.400" />
    </g>
  ),
  visMinus: (
    <g>
      {scope}
      <path d="M0 5h10" stroke="#555" strokeWidth="3" />
    </g>
  ),
  visSet: (
    <g>
      {scope}
      <path d="M0 3h10M0 8h10" stroke="#555" strokeWidth="2.400" />
    </g>
  ),
  boxes: (
    <g fill="#e4e4dc" stroke="#6c6c64" strokeWidth="1.400">
      <path d="M1 5h12v10H1z" />
      <path d="M9 7h10v9H9z" />
      <path d="M5 1h9v18H5z" fillOpacity=".5" />
      <path d="M9 7h5v8H9z" />
    </g>
  ),
  tabData: (
    <g>
      <path d="M1 5h8v11H1z" fill="#e8b82c" stroke="#9c7410" />
      <path d="M5 1h14v12H5z" fill="#dbe8fa" stroke="#4c74b4" />
      <path d="M5 1h14v3H5z" fill="#5c8cd8" />
      {lens(11, 10)}
    </g>
  ),
  tabDisplay: (
    <g>
      <path d="M2 5h14v14H2z" fill="#eaf1fc" stroke="#3c6cc0" strokeWidth="1.600" />
      <path d="M5 10h8M5 13h8M5 16h8" stroke="#3c6cc0" strokeWidth="1.400" />
      <path d="M5 4l6-3 8 1-2 4-8 3z" fill="#a0785c" stroke="#3f2a18" />
    </g>
  ),
  tabViews: (
    <path d="M2 18.500h16M4 15h8M14 2l-7 9M14 5q4 6-2 12" stroke="#2c4cc0" strokeWidth="2.600" fill="none" />
  ),
};

const Icon = ({ name, className = 'size-5' }: { name: string; className?: string }) => (
  <svg viewBox="0 0 20 20" className={`shrink-0 overflow-visible ${className}`} fill="none" aria-hidden="true">
    {icons[name]}
  </svg>
);

/* ---------- toolbars ---------- */

// "|" separator, "name+" has a drop-down arrow, "name*" is pressed, "LC" is the load case list
const rows = [
  [
    'new open cabinet cabinetBlue save protocol print preview | undo redo | plane lasso circleSel plusMinus yellowWin | listPanel* table | newLoad LC prev next eyeLoad xxxGray eyeResults* xxx | glasses abacusWin abacus',
    'handGrid snapGrid planeXY planeYZ planeXZ* gridTilt cogWin | copy rotate mirror cross info gearPage gears',
    'xyzDown xyzUp pdfDown pdfUp',
  ],
  [
    'newNode+ newLine newMember+ newPoly+ | nodeSupport lineSupport surfSupport | dim+ comment guide | surface+ opening+ fold+ solidWin solid+ | combine+ nodeLoad loadLine loadLine loadSurf loadSolid+',
    'pan zoomWin zoomAll cube cubes | axX axY axZ axNX+ scopeBox+ | visBlock+',
    'frame* roller | ibeam palette cubeStress supports section four+ ibeamWave panels | legend flash+ stripes+',
  ],
];

const Grip = () => (
  <div className="flex w-2 shrink-0 flex-col items-center gap-[2px]">
    {[0, 1, 2, 3, 4].map((i) => (
      <span key={i} className="size-[2px] bg-[#9aa0ac]" />
    ))}
  </div>
);

const Tool = ({ item }: { item: string }) => {
  if (item === '|') {
    return (
      <div className="flex w-2 shrink-0 justify-center">
        <span className="h-5 w-px bg-[#a9aeb9]" />
      </div>
    );
  }
  if (item === 'LC') {
    return (
      <div className="relative mx-[2px] w-[217px] shrink-0">
        <select aria-label="Load case" className="h-[22px] w-full appearance-none bg-white pl-[3px] font-['Open_Sans',sans-serif] text-[14px] text-[#111]">
          <option>LC1</option>
        </select>
        <span className="pointer-events-none absolute inset-y-px right-px flex w-[17px] items-center justify-center bg-[#d9dde5]">
          <Caret />
        </span>
      </div>
    );
  }
  const name = item.replace(/[+*]/, '');
  if (item.endsWith('+')) {
    return (
      <button aria-label={name} className="flex h-7 w-[43px] shrink-0 items-center gap-[7px] pl-[6px]">
        <Icon name={name} />
        <Caret />
      </button>
    );
  }
  return (
    <button
      aria-label={name}
      className={`flex h-7 w-7 shrink-0 items-center justify-center ${
        item.endsWith('*') ? 'rounded-[2px] border border-[#b89a5c] bg-linear-to-b from-[#f8c78c] via-[#fbb257] to-[#fff0a8]' : ''
      }`}
    >
      <Icon name={name} />
    </button>
  );
};

const Caret = () => (
  <svg viewBox="0 0 7 4" className="h-1 w-[7px] shrink-0" aria-hidden="true">
    <path d="M0 0h7L3.500 4z" fill="#777d88" />
  </svg>
);

const Toolbars = () => (
  <div className="pl-[2px]">
    {rows.map((groups, i) => (
      <div key={i} className="flex h-8 gap-px">
        {groups.map((group) => (
          <div
            key={group}
            role="toolbar"
            className="flex h-8 items-center rounded-[3px] border-b border-[#a4a8b0] bg-linear-to-b from-[#e9edf6] to-[#d0d4dd] pr-[2px]"
          >
            <Grip />
            {group.split(' ').map((item, n) => (
              <Tool key={n} item={item} />
            ))}
          </div>
        ))}
      </div>
    ))}
  </div>
);

/* ---------- project navigator ---------- */

const views = [
  'Deformation',
  'Model',
  'Normal Forces in Studs',
  'Shearflow s_v,0',
  'Shearflow s_v,90',
  'Support Forces in X (average)',
  'Support Forces in Z',
];

const generated = [
  'Lines by Type',
  'Lines with Support',
  'Members by Cross-Section',
  'Members by Material',
  'Members by Type',
  'Nodes with Support',
  'Surfaces by Eccentricity',
  'Surfaces by Geometry',
  'Surfaces by Material',
  'Surfaces by Stiffness',
  'Surfaces by Thickness',
];

const PanelButton = ({ name, wide, disabled, active }: { name: string; wide?: boolean; disabled?: boolean; active?: boolean }) => (
  <button
    aria-label={name}
    disabled={disabled}
    className={`flex h-[26px] shrink-0 items-center justify-center border ${wide ? 'w-[34px]' : 'w-[30px]'} ${
      active ? 'border-[#0a5499] bg-[#cce4f7]' : disabled ? 'border-[#bfbfbf] bg-[#cccccc]' : 'border-[#adadad] bg-[#e1e1e1]'
    }`}
  >
    <Icon name={name} className={disabled ? 'size-5 opacity-50 grayscale' : 'size-5'} />
  </button>
);

const Folder = ({ open }: { open?: boolean }) => (
  <svg viewBox="0 0 16 14" className="h-[14px] w-4 shrink-0" aria-hidden="true">
    <path d="M1 13V2h5l1 2h7v9z" fill="#f0d24a" stroke="#8f7a2c" />
    {open && <path d="M3 13L0 6h12l3 7z" fill="#cfae22" stroke="#7d6714" />}
  </svg>
);

const Expander = ({ open }: { open?: boolean }) => (
  <button aria-label={open ? 'Collapse' : 'Expand'} className="flex size-[11px] shrink-0 items-center justify-center border border-[#8b8b8b] bg-white">
    <svg viewBox="0 0 7 7" className="size-[7px]" aria-hidden="true">
      <path d={open ? 'M0 3.500h7' : 'M0 3.500h7M3.500 0v7'} stroke="#2b478c" />
    </svg>
  </button>
);

const TreeRow = ({ label, child, leaf, open, mixed }: { label: string; child?: boolean; leaf?: boolean; open?: boolean; mixed?: boolean }) => (
  <div className="flex h-[18px] items-center">
    {child && (
      <div className="flex h-full w-[19px] shrink-0 justify-start pl-[5px]">{leaf && <span className="border-l border-dotted border-[#777]" />}</div>
    )}
    <div className="flex h-full w-[11px] shrink-0 flex-col items-center">
      {leaf ? (
        <span className="ml-[5px] h-[10px] w-[6px] border-b border-l border-dotted border-[#777]" />
      ) : (
        <>
          <span className="h-[4px] border-l border-dotted border-[#777]" />
          <Expander open={open} />
          <span className="flex-1 border-l border-dotted border-[#777]" />
        </>
      )}
    </div>
    <span className="mr-[2px] w-[5px] shrink-0 border-t border-dotted border-[#777]" />
    <label className="flex items-center">
      <input
        type="checkbox"
        className={`mr-[3px] size-[13px] shrink-0 appearance-none border border-[#4e5562] ${
          mixed ? 'bg-[#9a9a9a] shadow-[inset_0_0_0_2px_#eceff4]' : 'bg-linear-to-br from-[#f6f8fb] to-[#c9d1e0]'
        }`}
      />
      <Folder open={mixed} />
      <span className="ml-1 leading-[18px] whitespace-nowrap">{label}</span>
    </label>
  </div>
);

const Navigator = () => (
  <aside className="mr-[5px] flex w-[331px] shrink-0 flex-col pt-px">
    <header className="flex h-7 items-center bg-[#b9bfc9] pr-1 pl-1 font-['Open_Sans',sans-serif] text-[13px] text-[#4a5060]">
      <h2 className="flex-1">Project Navigator - Views</h2>
      <button aria-label="Auto hide" className="mr-[6px]">
        <Pin className="size-3" />
      </button>
      <button aria-label="Close panel">
        <X className="size-[14px]" />
      </button>
    </header>

    <div className="flex flex-1 flex-col border border-[#a0a5af] bg-[#eceef6] px-[3px] py-[2px]">
      <div className="flex flex-1 flex-col overflow-hidden border-t border-l border-[#6f7378] bg-[#f7f7f7]">
        <div className="flex flex-1 flex-col border-r border-[#a8a8e8]">
          <div className="flex w-[320px] gap-[6px] overflow-hidden pt-[6px] pl-[5px]">
            <PanelButton wide name="axNX" />
            <PanelButton wide name="axNY" />
            <PanelButton wide name="axNZ" />
            <span className="w-0" />
            <PanelButton wide disabled name="axU" />
            <PanelButton wide disabled name="axV" />
            <PanelButton wide disabled name="axW" />
            <span className="w-0" />
            <PanelButton wide disabled name="axNU" />
            <PanelButton wide disabled name="axNV" />
          </div>

          <h3 className="flex h-[41px] items-center pt-2 pl-1 font-['Liberation_Sans',sans-serif] text-[14px] text-black">User-defined views:</h3>
          <fieldset className="h-[215px] border border-[#83868c] bg-[#fbfbf2] pt-px pl-6 font-['Liberation_Sans',sans-serif] text-[13px] text-black">
            {views.map((view, i) => (
              <label key={view} className="flex h-[18px] items-center">
                <input
                  type="radio"
                  name="view"
                  defaultChecked={i === 0}
                  className="mr-[2px] size-[13px] shrink-0 appearance-none rounded-full border border-[#444] bg-[#f6f7f8] shadow-[inset_1px_1px_2px_#c4c8d0] checked:bg-[radial-gradient(circle,#111_0_2px,#f6f7f8_3px)]"
                />
                <span className={i === 0 ? 'border border-dotted border-black bg-[#e4e4e4] px-px leading-4' : 'px-[2px] leading-4'}>{view}</span>
              </label>
            ))}
          </fieldset>
          <div className="flex h-[34px] border-b border-[#a8a8e8] pt-[3px] pr-1 pl-[3px]">
            <PanelButton wide name="viewNew" />
            <span className="w-3" />
            <PanelButton wide name="viewSet" />
            <span className="w-[6px]" />
            <PanelButton wide name="viewOff" />
            <span className="flex-1" />
            <PanelButton wide name="viewDel" />
            <span className="w-1" />
            <PanelButton wide name="del" />
          </div>

          <h3 className="mt-[6px] flex h-[19px] items-center border-t border-[#8f8f8f] bg-[#d9e5ff] pl-[3px] font-['Open_Sans',sans-serif] text-[13px] text-[#10106e]">
            Visibilities
          </h3>
          <div className="flex gap-[5px] pt-[7px] pl-[5px]">
            <PanelButton disabled name="visBox" />
            <PanelButton disabled name="visX" />
            <PanelButton name="visRed" />
            <PanelButton name="visNum" />
            <span className="w-0" />
            <PanelButton name="visTurn" />
            <PanelButton disabled name="visNo" />
            <span className="w-0" />
            <PanelButton disabled name="visDel" />
          </div>
          <label className="flex h-[41px] items-center gap-[3px] pt-2 pl-1 font-['Noto_Sans',sans-serif] text-[13px] text-black">
            <input type="checkbox" className="size-4 appearance-none border border-[#333] bg-white" />
            <span>
              <u>V</u>isibilities:
            </span>
          </label>
          <div className="min-h-60 flex-1 border border-[#83868c] bg-[#fbfbf2] pt-px pl-[7px] font-['Noto_Sans',sans-serif] text-[13px] text-black">
            <TreeRow label="User-defined" open mixed />
            <TreeRow label="Group 1" child leaf />
            <TreeRow label="Generated" open mixed />
            {generated.map((label) => (
              <TreeRow key={label} label={label} child />
            ))}
          </div>
          <div className="flex gap-[5px] pt-[5px] pl-[5px]">
            <PanelButton name="visNew" />
            <span className="w-0" />
            <PanelButton disabled name="visPlus" />
            <PanelButton disabled name="visMinus" />
            <PanelButton disabled name="visSet" />
            <span className="w-0" />
            <PanelButton disabled name="visNo" />
            <span className="w-0" />
            <PanelButton active name="boxes" />
            <PanelButton disabled name="boxes" />
            <PanelButton disabled name="boxes" />
          </div>
          <label className="flex h-[39px] items-center gap-[3px] pt-[10px] pl-1 font-['Noto_Sans',sans-serif] text-[13px] text-[#6d6d6d]">
            <input type="checkbox" disabled className="size-4 appearance-none border border-[#ccc] bg-white" />
            <span>
              <u>A</u>dd new objects into visibility:
            </span>
          </label>
          <div className="relative mr-1 mb-[7px] ml-1">
            <select disabled aria-label="Visibility" className="block h-6 w-full appearance-none border border-[#bfbfbf] bg-[#cccccc]" />
            <svg viewBox="0 0 10 6" className="pointer-events-none absolute top-[9px] right-[5px] h-[6px] w-[10px]" aria-hidden="true">
              <path d="M1 1l4 4 4-4" fill="none" stroke="#999" />
            </svg>
          </div>
          <div className="border-t border-[#a8a8e8] pb-px" />
        </div>
      </div>
    </div>

    <nav className="flex h-[29px] items-start font-['Open_Sans',sans-serif] text-[13px] text-[#4a5060]">
      <a href="#data" className="flex h-7 w-[60px] items-center gap-[3px] pl-[6px]">
        <Icon name="tabData" className="size-4" />
        Data
      </a>
      <a href="#display" className="flex h-7 w-[76px] items-center gap-[2px] pl-1">
        <Icon name="tabDisplay" className="size-4" />
        Display
      </a>
      <a href="#views" className="flex h-[26px] w-[58px] items-center gap-[2px] rounded-b-[3px] border border-t-0 border-[#b8dfe6] bg-linear-to-b from-[#dcdfe5] to-[#fafbfc] pt-[2px] pl-[2px]">
        <Icon name="tabViews" className="size-4" />
        Views
      </a>
      <a href="#results" className="flex h-7 items-center gap-[2px] pl-[7px]">
        <Icon name="palette" className="size-4" />
        Results
      </a>
    </nav>
  </aside>
);

/* ---------- drawings ---------- */

const Support = ({ x, y, stem }: { x: number; y: number; stem: number }) => (
  <g transform={`translate(${x} ${y})`}>
    <path d={`M0-2L31 32H10V${stem}H-10V32H-31Z`} fill="#80ffff" />
    <path d="M-31 45.500H32" stroke="#1cffff" strokeWidth="3" />
    <circle r="10" fill="#1cf4f4" fillOpacity=".8" />
  </g>
);

const LoadDrawing = () => (
  <svg viewBox="348 165 768 825" className="absolute inset-0 h-full w-full" role="img" aria-label="Loads">
    <g stroke="#00007f" fill="#00007f">
      <rect x="556" y="278" width="415" height="31" fill="#cccce6" stroke="none" />
      <path d="M556 278h415M556 309h415M460 348h96" strokeWidth="3" />
      {[556, 660, 763, 867, 971].map((x) => (
        <g key={x}>
          <path d={`M${x} 278v24`} strokeWidth="2.500" />
          <path d={`M${x - 6.5} 299h13l-6.500 9.500z`} stroke="none" />
        </g>
      ))}
      <path d="M512 341.500v13l9-6.500z" stroke="none" />
    </g>
    <rect x="556" y="348" width="415" height="466" fill="#ffdf9f" />
    {[617, 721, 824, 928].map((x) => (
      <path key={x} d={`M${x - 1} 340v16l6-8z`} fill="#20106a" />
    ))}
    <g fill="#ff9d00">
      {[552, 658, 764, 966].map((x) => (
        <rect key={x} x={x} y="348" width="10" height="466" />
      ))}
      <rect x="556" y="343" width="415" height="10" />
      <rect x="556" y="809" width="415" height="11" />
      <rect x="870" y="348.500" width="10" height="466" stroke="#ff4a1a" strokeWidth="1.500" />
    </g>
    <path d="M875 629l6 16h-12z" fill="#ff0000" />
    <g fontFamily="Liberation Sans, sans-serif" fontSize="12" fontWeight="bold" fill="#00007f">
      <text x="751" y="270">0.069</text>
      <text x="632" y="352" fill="#241040">0.137</text>
    </g>
    <Support x={556} y={824} stem={63} />
    <Support x={971} y={824} stem={63} />
  </svg>
);

// isolines of the colour field: y at the left side, the middle and the right side
const isolines: { y: number[]; rgb: number[] }[] = [
  { y: [330, 310, 354], rgb: [255, 80, 0] },
  { y: [382, 360, 390], rgb: [255, 170, 0] },
  { y: [455, 425, 449], rgb: [208, 208, 0] },
  { y: [520, 494, 514], rgb: [255, 255, 0] },
  { y: [605, 559, 581], rgb: [0, 255, 0] },
  { y: [684, 630, 633], rgb: [0, 230, 138] },
  { y: [768, 703, 709], rgb: [0, 250, 250] },
  { y: [860, 802, 800], rgb: [0, 115, 255] },
  { y: [900, 850, 850], rgb: [0, 80, 255] },
];

const bands = isolines.slice(0, -1).flatMap((a, i) => {
  const b = isolines[i + 1];
  return Array.from({ length: 24 }, (_, k) => {
    const t = k / 24;
    const mix = (p: number, q: number) => p + (q - p) * t;
    const [l, m, r] = a.y.map((v, n) => mix(v, b.y[n]));
    return {
      d: `M1270 ${l}Q1530 ${2 * m - (l + r) / 2} 1790 ${r}V900H1270Z`,
      fill: `rgb(${a.rgb.map((v, n) => Math.round(mix(v, b.rgb[n]))).join(' ')})`,
    };
  });
});

const stud = 'M1347 337C1327 410 1322 510 1314 610C1308 690 1302 755 1289 815';
const topRail = 'M1347 336C1380 333 1420 331 1450 331C1510 332 1590 339 1673 339C1710 340 1750 341 1772 339';
const bottomRail = 'M1288 816C1320 812 1360 809 1395 809.500C1450 810 1500 816 1619 817H1713';

const studStops = [
  [337, '#b40000'],
  [352, '#c80000'],
  [373, '#ff0000'],
  [398, '#ff9a00'],
  [440, '#d0cc00'],
  [483, '#ffff00'],
  [555, '#00ff00'],
  [620, '#00e67c'],
  [705, '#00f0f8'],
  [743, '#0090ff'],
  [780, '#0000ff'],
  [805, '#000098'],
  [815, '#000090'],
] as const;

const DeformationDrawing = () => (
  <svg viewBox="1138 165 768 825" className="absolute inset-0 h-full w-full" role="img" aria-label="Global deformations">
    <defs>
      <clipPath id="wall">
        <path d="M1335.500 324L1762 346C1752 420 1744 520 1738 600C1732 690 1727 760 1725 816L1298 803C1308 740 1312 680 1317 610C1322 510 1331 420 1333 373Z" />
      </clipPath>
      <linearGradient id="stud" gradientUnits="userSpaceOnUse" x1="0" y1="337" x2="0" y2="815">
        {studStops.map(([y, color]) => (
          <stop key={y} offset={(y - 337) / 478} stopColor={color} />
        ))}
      </linearGradient>
      <linearGradient id="rail" gradientUnits="userSpaceOnUse" x1="1288" y1="0" x2="1713" y2="0">
        <stop offset="0" stopColor="#000090" />
        <stop offset=".2" stopColor="#0000d8" />
        <stop offset=".4" stopColor="#0000d8" />
        <stop offset=".6" stopColor="#000098" />
        <stop offset="1" stopColor="#000090" />
      </linearGradient>
    </defs>

    <g clipPath="url(#wall)">
      <rect x="1270" y="300" width="520" height="540" fill="#ff5000" />
      {bands.map((band, i) => (
        <path key={i} d={band.d} fill={band.fill} />
      ))}
    </g>
    <path
      d="M1333 373L1335.500 324L1394 328M1443.500 336v30l-2 12M1553 338v30l-2 12M1662.500 342v30l-2 12M1762 345v16M1298 780v23l38 2M1409 770l-1 34M1518.500 780v28M1628 784v26M1728 770l-3 46h-6"
      fill="none"
      stroke="#181818"
    />

    <g fill="none">
      <path d={topRail} stroke="#780000" strokeWidth="13" />
      <path d={topRail} stroke="#bc0000" strokeWidth="10" />
      <path d={bottomRail} stroke="#780000" strokeWidth="13" />
      <path d={bottomRail} stroke="url(#rail)" strokeWidth="10" />
      {[
        [0, 0],
        [109, -5],
        [218, -1],
        [327, 2],
        [425, 3],
      ].map(([dx, dy]) => (
        <g key={dx} transform={`translate(${dx} ${dy})`}>
          <path d={stud} stroke="#780000" strokeWidth="13" />
          <path d={stud} stroke="url(#stud)" strokeWidth="10" />
        </g>
      ))}
      <path d={topRail} transform="translate(0 6)" stroke="#780000" strokeWidth="1.500" />
      <path d={bottomRail} transform="translate(0 -6)" stroke="#780000" strokeWidth="1.500" />
    </g>

    <path d="M1338 821l3-4 3 4zM1444 821l3-4 3 4z" fill="#8ff" />
    <Support x={1288} y={828} stem={63} />
    <Support x={1713} y={828} stem={63} />
  </svg>
);

/* ---------- document windows ---------- */

type DocumentWindowProps = { title: string; lines: string[]; footer?: string; active?: boolean; children: ReactNode };

const DocumentWindow = ({ title, lines, footer, active, children }: DocumentWindowProps) => {
  const control = `flex h-6 w-[42px] items-center justify-center rounded-[3px] border shadow-[inset_0_0_0_1px_rgba(255,255,255,0.5)] ${
    active ? 'border-[#5f7590] bg-linear-to-b from-[#c4d6ea] via-[#a0b9d6] to-[#b6cee8]' : 'border-[#8a9cb4] bg-[#cbdae9]'
  }`;
  return (
    <section
      className={`flex min-w-0 flex-1 flex-col rounded-t-[6px] border px-[9px] pb-[9px] ${
        active
          ? 'border-black bg-[#bad0ea] shadow-[inset_-1px_-1px_0_#4cc8e8]'
          : 'border-[#444] bg-[#d7e4f2]'
      }`}
    >
      <header
        className={`-mx-[9px] flex h-[37px] shrink-0 items-center gap-[2px] rounded-t-[6px] pt-[5px] pr-[10px] pl-[10px] shadow-[inset_1px_1px_0_rgba(255,255,255,0.8)] ${
          active ? 'bg-linear-to-b from-[#98b2d0] to-[#bad0ea]' : 'bg-linear-to-b from-[#becbd9] to-[#d7e4f2]'
        }`}
      >
        <svg viewBox="0 0 20 18" className="mr-[2px] h-[18px] w-5" aria-hidden="true">
          <path d="M0 0h20v18H0z" fill="#1c2460" />
          <path d="M0 11.500h20M10 2v15" stroke="#fff" strokeWidth="3" />
          <path d="M10 2L2 10M10 2l8 8" stroke="#fff" strokeWidth="1.600" fill="none" />
        </svg>
        <h2
          className={`flex-1 truncate font-['Open_Sans',sans-serif] text-[14px] ${active ? 'text-[#1a1a1a]' : 'text-[#8f9296]'}`}
        >
          {title}
        </h2>
        <button aria-label="Minimize" className={control}>
          <span className="h-[6px] w-[17px] rounded-[1px] border border-[#5b6070] bg-white" />
        </button>
        <button aria-label="Maximize" className={control}>
          <span className="flex h-[14px] w-4 items-center justify-center rounded-[1px] border border-[#5b6070] bg-white">
            <span className="h-[6px] w-2 border border-[#5b6070] bg-[#b7c9dd]" />
          </span>
        </button>
        <button
          aria-label="Close"
          className={
            active
              ? 'flex h-6 w-[42px] items-center justify-center rounded-[3px] border border-[#6b2320] bg-linear-to-b from-[#e29a8c] via-[#c4412c] to-[#d0604c]'
              : control
          }
        >
          <svg viewBox="0 0 18 14" className="h-[14px] w-[18px]" aria-hidden="true">
            <path d="M3 1l12 12M15 1L3 13" stroke="#5b6070" strokeWidth="6" />
            <path d="M3 1l12 12M15 1L3 13" stroke="#fff" strokeWidth="4" />
          </svg>
        </button>
      </header>
      <div className="relative flex flex-1 flex-col justify-between overflow-hidden border border-t-[#666] border-r-[#e6e6e6] border-b-[#e6e6e6] border-l-[#666] bg-white px-1 py-[5px] font-['Liberation_Sans',sans-serif] text-[11px] leading-[14px] text-black">
        {children}
        <div className="relative">
          {lines.map((line) => (
            <p key={line}>{line}</p>
          ))}
        </div>
        {footer && <p className="relative">{footer}</p>}
      </div>
    </section>
  );
};

/* ---------- status bar ---------- */

const toggles = [
  { label: 'SNAP', width: 'w-[43px]', on: true },
  { label: 'GRID', width: 'w-[42px]', on: false },
  { label: 'CARTES', width: 'w-[67px]', on: true },
  { label: 'OSNAP', width: 'w-[54px]', on: true },
  { label: 'GLINES', width: 'w-[55px]', on: true },
  { label: 'DXF', width: 'w-[35px]', on: true },
];

const StatusBar = () => (
  <footer className="flex h-7 shrink-0 items-stretch overflow-hidden border-t border-[#a9adb4] bg-linear-to-b from-[#eceef0] via-[#a9aeb7] to-[#bcbfc4] font-['Liberation_Sans',sans-serif] text-[14px] text-[#333840]">
    <p className="flex flex-1 items-center pt-[2px] pl-1">Workplane</p>
    {toggles.map(({ label, width, on }) => (
      <button
        key={label}
        aria-pressed={on}
        className={`mt-[2px] flex shrink-0 items-start justify-center border border-b-0 leading-5 ${width} ${
          on ? 'border-t-black border-r-white border-l-black' : 'border-t-white border-r-[#8a8d92] border-l-white'
        }`}
      >
        {label}
      </button>
    ))}
    <div className="flex w-[498px] shrink-0 items-center pt-px text-[13px] leading-[26px]">
      <span className="w-[101px]" />
      <span className="w-[88px] overflow-hidden border-r border-[#8a8d92] whitespace-nowrap">CS: Global XYZ</span>
      <span className="w-[88px] border-r border-[#8a8d92] pl-[2px]">Plane: XZ</span>
      <span className="flex w-[74px] gap-[5px] border-r border-[#8a8d92] pl-[2px]">
        X: <span>10.59 ft</span>
      </span>
      <span className="flex w-[75px] gap-[5px] border-r border-[#8a8d92] pl-[2px]">
        Y: <span>0.00 ft</span>
      </span>
      <span className="flex gap-[5px] pl-[2px]">
        Z: <span>-8.43 ft</span>
      </span>
    </div>
  </footer>
);

export default function App() {
  return (
    <div className="flex min-h-screen flex-col bg-[#d0d4dc]">
      {/* Title bar */}
      <header className="flex h-[29px] items-center bg-white pl-[2px] font-['Open_Sans',sans-serif] text-[14px] text-black">
        <svg viewBox="0 0 20 20" className="mr-[5px] size-5 overflow-visible" aria-hidden="true">
          <path d="M4 5l7-4 8 4v7l-7 6-8-4z" fill="#6c84ac" stroke="#2c3c5c" />
          <path d="M4 5l7 4 8-4M11 9v8M8 3l7 4v8M7 7l7-4" stroke="#2c3c5c" fill="none" />
          <text x="0" y="18" fontSize="14" fontWeight="bold" fontFamily="Liberation Sans, sans-serif" fill="#f4d21c" stroke="#5c4c08" strokeWidth=".6">5</text>
        </svg>
        <h1 className="flex-1">RFEM 5.22.03 x64 Student - 004705_Wood shear wall - Results</h1>
        <div className="flex">
          <button aria-label="Minimize" className="flex h-[29px] w-[58px] items-center justify-center">
            <span className="h-px w-[13px] bg-black" />
          </button>
          <button aria-label="Restore" className="flex h-[29px] w-[58px] items-center justify-center">
            <svg viewBox="0 0 13 13" className="size-[13px]" fill="none" stroke="#000" aria-hidden="true">
              <path d="M.5 2.500h9v10h-9zM2.500 2.500v-2h10v10h-3" />
            </svg>
          </button>
          <button aria-label="Close" className="flex h-[29px] w-[62px] items-center justify-center">
            <svg viewBox="0 0 13 13" className="size-[13px]" fill="none" stroke="#000" aria-hidden="true">
              <path d="M.5.500l12 12M12.500.500l-12 12" />
            </svg>
          </button>
        </div>
      </header>

      {/* Menu */}
      <nav className="flex h-[30px] items-center font-['Open_Sans',sans-serif] text-[13px] text-[#4f5563]">
        <div className="mr-[7px] ml-[2px]">
          <Grip />
        </div>
        <div className="flex gap-[15px] pt-px">
          {menus.map(([before, key, after]) => (
            <button key={after}>
              {before}
              <u className="underline-offset-2">{key}</u>
              {after}
            </button>
          ))}
        </div>
      </nav>

      <Toolbars />

      <main className="flex flex-1">
        <Navigator />
        <div className="flex min-w-0 flex-1 border-t-2 border-l border-[#6a6d73] bg-[#c4c8cf] pt-px pr-[3px] pb-px">
          <DocumentWindow title="004705_Wood shear wall - Results, LC1*" lines={['LC1', 'Loads [kip/ft]']}>
            <LoadDrawing />
          </DocumentWindow>
          <DocumentWindow
            active
            title="004705_Wood shear wall - Results*"
            lines={['Global Deformations u [in]', 'LC1']}
            footer="Max u: 0.058, Min u: 0.000 in"
          >
            <DeformationDrawing />
          </DocumentWindow>
        </div>
      </main>

      <StatusBar />
    </div>
  );
}
